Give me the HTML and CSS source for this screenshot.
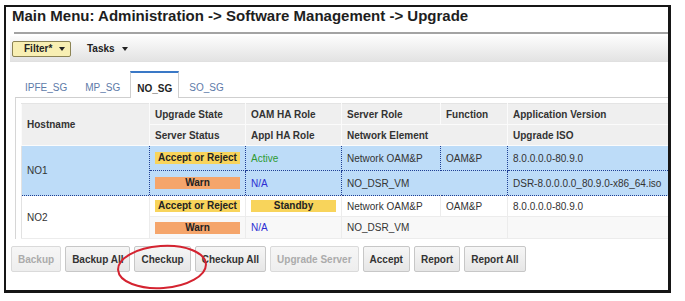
FILE: index.html
```html
<!DOCTYPE html>
<html>
<head>
<meta charset="utf-8">
<link rel="stylesheet" href="styles.css">
</head>
<body>
<div class="frame">
  <div class="title">Main Menu: Administration -&gt; Software Management -&gt; Upgrade</div>
  <div class="rule"></div>
  <div class="toolbar">
    <div class="filter">Filter* <span class="caret"></span></div>
    <div class="tasks">Tasks <span class="caret"></span></div>
  </div>
  <div class="tabs">
    <div class="tab">IPFE_SG</div>
    <div class="tab">MP_SG</div>
    <div class="tab active">NO_SG</div>
    <div class="tab">SO_SG</div>
  </div>
  <div class="panel">
    <table class="grid">
      <colgroup>
        <col class="c-host"><col class="c-state"><col class="c-ha"><col class="c-role"><col class="c-func"><col class="c-ver">
      </colgroup>
      <thead>
        <tr class="h1">
          <th rowspan="2">Hostname</th>
          <th>Upgrade State</th>
          <th>OAM HA Role</th>
          <th>Server Role</th>
          <th>Function</th>
          <th>Application Version</th>
        </tr>
        <tr class="h2">
          <th>Server Status</th>
          <th>Appl HA Role</th>
          <th colspan="2">Network Element</th>
          <th>Upgrade ISO</th>
        </tr>
      </thead>
      <tbody>
        <tr class="sel r1">
          <td rowspan="2">NO1</td>
          <td><span class="badge yellow">Accept or Reject</span></td>
          <td class="active-txt">Active</td>
          <td>Network OAM&amp;P</td>
          <td>OAM&amp;P</td>
          <td>8.0.0.0.0-80.9.0</td>
        </tr>
        <tr class="sel r2">
          <td><span class="badge orange">Warn</span></td>
          <td class="na">N/A</td>
          <td colspan="2">NO_DSR_VM</td>
          <td>DSR-8.0.0.0.0_80.9.0-x86_64.iso</td>
        </tr>
        <tr class="plain r3">
          <td rowspan="2" class="host2">NO2</td>
          <td><span class="badge yellow">Accept or Reject</span></td>
          <td><span class="badge yellow">Standby</span></td>
          <td>Network OAM&amp;P</td>
          <td>OAM&amp;P</td>
          <td>8.0.0.0.0-80.9.0</td>
        </tr>
        <tr class="plain r4">
          <td><span class="badge orange">Warn</span></td>
          <td class="na">N/A</td>
          <td colspan="2">NO_DSR_VM</td>
          <td></td>
        </tr>
      </tbody>
    </table>
  </div>
  <div class="buttons">
    <button class="btn disabled">Backup</button>
    <button class="btn">Backup All</button>
    <button class="btn">Checkup</button>
    <button class="btn">Checkup All</button>
    <button class="btn disabled">Upgrade Server</button>
    <button class="btn">Accept</button>
    <button class="btn">Report</button>
    <button class="btn">Report All</button>
  </div>
  <svg class="circle" width="100" height="52" viewBox="0 0 100 52">
    <ellipse cx="50" cy="26" rx="44" ry="21" fill="none" stroke="#d42330" stroke-width="2" transform="rotate(-4 50 26)"/>
  </svg>
</div>
</body>
</html>
```

FILE: styles.css
```css
html, body {
  margin: 0;
  padding: 0;
  background: #fff;
}
body {
  font-family: "Liberation Sans", Arial, sans-serif;
  color: #333;
}
.frame {
  position: relative;
  box-sizing: border-box;
  margin: 5px 0 0 4px;
  width: 667px;
  height: 288px;
  border: 2px solid #161616;
  border-right-width: 3px;
  border-bottom-width: 3px;
  overflow: hidden;
  background: #fff;
}
.title {
  font-size: 15px;
  font-weight: bold;
  line-height: 18px;
  color: #1e1e1e;
  padding-left: 6px;
}
.rule {
  margin: 7px 0 0 8px;
  height: 2px;
  background: #a3a3a3;
}
.toolbar {
  margin: 2px 0 0 4px;
  height: 25px;
  display: flex;
  align-items: center;
  padding-left: 2px;
  background: linear-gradient(#fcfcfc, #e3e3e3);
  border-bottom: 1px solid #e0e0e0;
  font-size: 10px;
  font-weight: bold;
  color: #222;
}
.filter {
  box-sizing: border-box;
  width: 59px;
  height: 16px;
  display: flex;
  align-items: center;
  padding-left: 11px;
  background: #f8efb3;
  border: 1px solid #8c8455;
  border-radius: 2px;
}
.tasks {
  margin-left: 16px;
  display: flex;
  align-items: center;
}
.caret {
  display: inline-block;
  width: 0;
  height: 0;
  margin-left: 7px;
  border-left: 3px solid transparent;
  border-right: 3px solid transparent;
  border-top: 4px solid #222;
}
.tabs {
  display: flex;
  align-items: flex-start;
  gap: 2px;
  margin-top: 9px;
  padding-left: 11px;
  height: 26px;
  font-size: 10px;
  position: relative;
  z-index: 2;
}
.tab {
  box-sizing: border-box;
  height: 26px;
  padding: 9px 8px 0;
  border-top: 2px solid transparent;
  line-height: 12px;
  color: #5d7aa8;
}
.tab.active {
  height: 27px;
  padding: 10px 6px 0;
  border-top: 2px solid #3a78c6;
  border-left: 1px solid #cfcfcf;
  border-right: 1px solid #cfcfcf;
  background: #fff;
  color: #1f1f1f;
  font-weight: bold;
}
.panel {
  margin-left: 9px;
  border-top: 1px solid #cfcfcf;
  border-left: 1px solid #d6d6d6;
  padding: 5px 0 0 5px;
  position: relative;
  z-index: 1;
}
.grid {
  border-collapse: collapse;
  table-layout: fixed;
  width: 656px;
  font-size: 10px;
  border-left: 1px solid #e2e2e2;
}
.c-host { width: 128px; }
.c-state { width: 96px; }
.c-ha { width: 96px; }
.c-role { width: 99px; }
.c-func { width: 67px; }
.c-ver { width: 170px; }
.grid th {
  background: #efefef;
  font-weight: bold;
  color: #333;
  text-align: left;
  padding: 0 5px;
  border: 1px solid #fbfbfb;
  white-space: nowrap;
}
.grid thead tr { height: 21px; }
.grid thead tr.h1 th { border-top: 1px solid #e4e4e4; }
.grid td {
  padding: 0 5px;
  white-space: nowrap;
  color: #333;
}
.grid tr.sel td {
  background: #bddcf8;
  border: 1px dotted #1f3f94;
}
.grid tr.r1, .grid tr.r2 { height: 25px; }
.grid tr.r3 { height: 21px; }
.grid tr.r4 { height: 22px; }
.grid tr.plain td {
  background: #fff;
  border-right: 1px solid #ececec;
  border-bottom: 1px solid #ececec;
}
.grid tr.r4 td { background: #f8f8f8; }
.grid tr.r4 td.host2, .grid td.host2 { background: #fcfcfc; }
.grid td.active-txt { color: #2e9a33; }
.grid td.na { color: #2d2dd2; }
.badge {
  display: block;
  height: 12px;
  line-height: 12px;
  text-align: center;
  font-weight: bold;
  color: #222;
}
.badge.yellow { background: #f8d45b; }
.badge.orange { background: #f5a56b; }
.buttons {
  display: flex;
  gap: 4px;
  margin: 7px 0 0 5px;
}
.btn {
  box-sizing: border-box;
  height: 26px;
  padding: 0 6px;
  font-family: "Liberation Sans", Arial, sans-serif;
  font-size: 10px;
  font-weight: bold;
  color: #333;
  background: linear-gradient(#f6f6f6, #e6e6e6);
  border: 1px solid #c7c7c7;
  border-radius: 2px;
}
.btn.disabled {
  color: #ababab;
  background: linear-gradient(#f6f6f6, #eeeeee);
  border-color: #dadada;
}
.circle {
  position: absolute;
  left: 106px;
  top: 234px;
  pointer-events: none;
}
```
